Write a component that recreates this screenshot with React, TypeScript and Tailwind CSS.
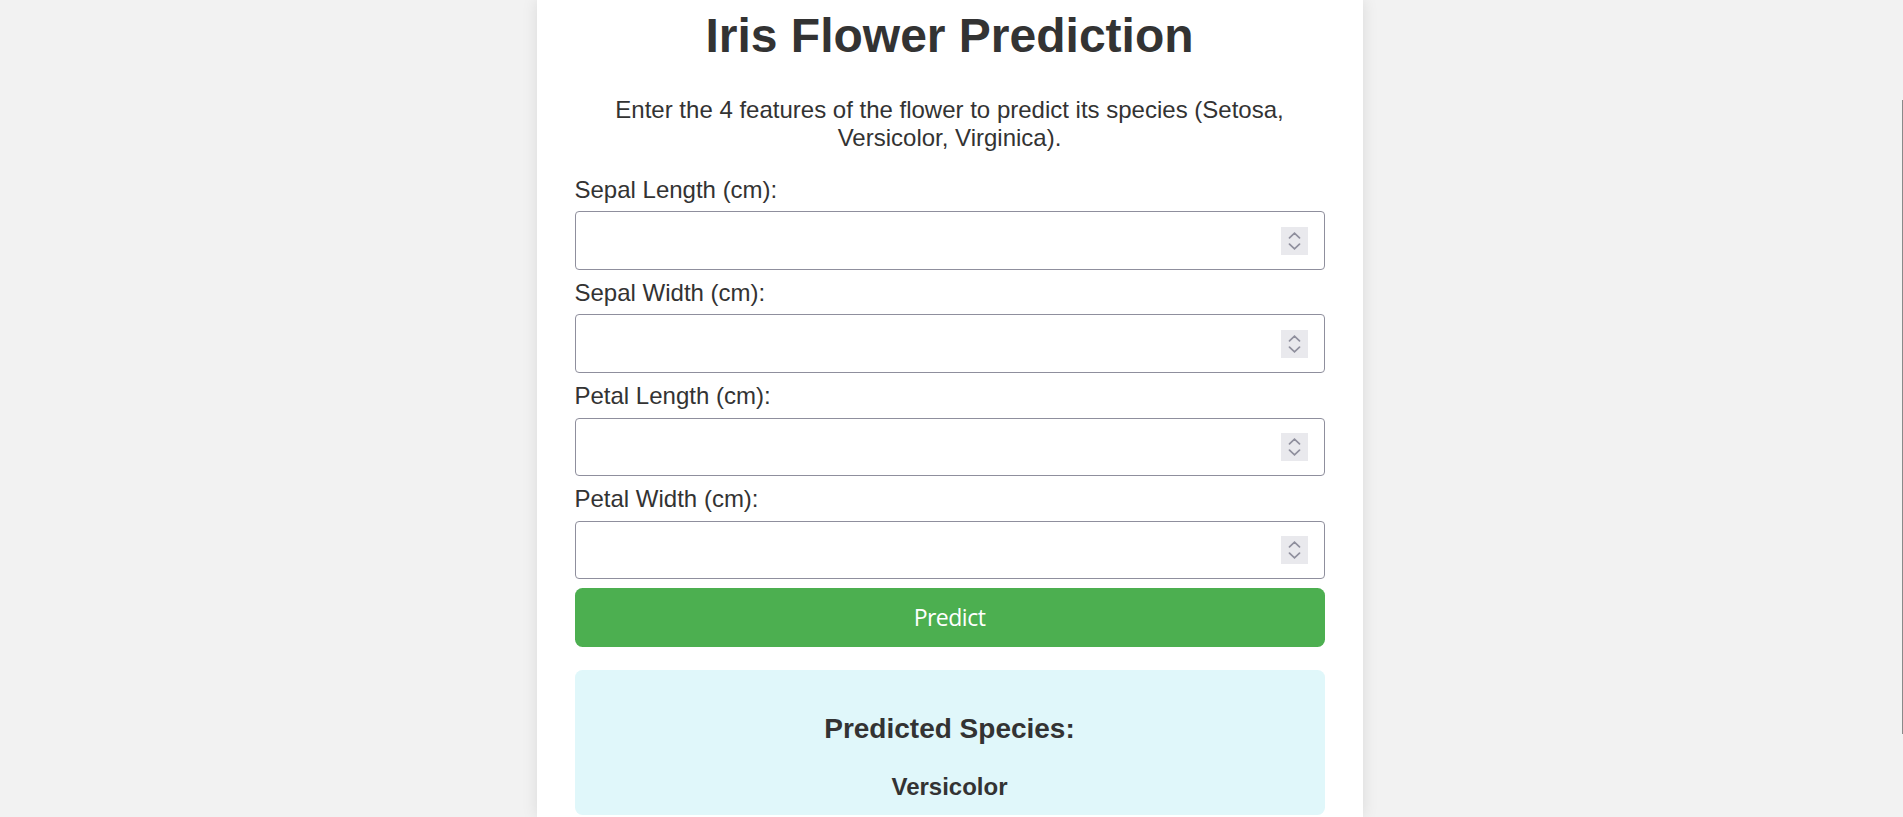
import React, { type FC } from "react"

const FIELDS = [
  { id: "sepal_length", label: "Sepal Length (cm):" },
  { id: "sepal_width", label: "Sepal Width (cm):" },
  { id: "petal_length", label: "Petal Length (cm):" },
  { id: "petal_width", label: "Petal Width (cm):" },
]

const Spinner: FC = () => (
  <span
    className="pointer-events-none absolute right-[17px] top-1/2 flex h-[28px] w-[27px] -translate-y-1/2 flex-col items-center justify-center gap-[4px] bg-[#e9e9ed]"
    aria-hidden="true"
  >
    <svg className="h-[7px] w-[13px]" viewBox="0 0 13 7" fill="none" stroke="#8f8f9d" strokeWidth="1.7" strokeLinecap="round">
      <path d="M1.5 5.8L6.5 1.2l5 4.6" />
    </svg>
    <svg className="h-[7px] w-[13px]" viewBox="0 0 13 7" fill="none" stroke="#8f8f9d" strokeWidth="1.7" strokeLinecap="round">
      <path d="M1.5 1.2L6.5 5.8l5-4.6" />
    </svg>
  </span>
)

const App: FC = () => (
  <div className="flex h-[817px] justify-center overflow-hidden bg-[#f2f2f2] pr-[4px] font-['Liberation_Sans',Arial,sans-serif] text-[#333333]">
    <main className="w-[826px] shrink-0 bg-white px-[38px] pt-[8px] shadow-[0_0_15px_rgba(0,0,0,0.1)]">
      <h1 className="mb-[33px] text-center text-[48px] font-bold leading-[55px]">Iris Flower Prediction</h1>
      <p className="mb-[24.6px] text-center text-[24px] leading-[27.6px]">
        Enter the 4 features of the flower to predict its species (Setosa, Versicolor, Virginica).
      </p>

      <form onSubmit={(e) => e.preventDefault()}>
        {FIELDS.map((f) => (
          <div key={f.id}>
            <label htmlFor={f.id} className="mb-[8px] block text-[24px] leading-[27.6px]">{f.label}</label>
            <div className="relative mb-[9px]">
              <input
                id={f.id}
                type="number"
                step="any"
                className="block h-[58.5px] w-full appearance-none rounded-[4px] border border-[#8f8f9d] bg-white px-[15px] text-[24px] outline-none [-moz-appearance:textfield] [&::-webkit-inner-spin-button]:appearance-none [&::-webkit-outer-spin-button]:appearance-none"
              />
              <Spinner />
            </div>
          </div>
        ))}
        <button
          type="submit"
          className="mb-[22.5px] mt-[1px] block h-[59px] w-full rounded-[7.5px] bg-[#4caf50] font-['Open_Sans',sans-serif] text-[23px] tracking-[-0.5px] text-white"
        >
          Predict
        </button>
      </form>

      <section className="rounded-[7.5px] bg-[#e0f7fa] px-[15px] pb-[14.5px] pt-[15px] text-center">
        <h3 className="mb-[28px] mt-[28px] text-[28px] font-bold leading-[32px]">Predicted Species:</h3>
        <p className="text-[24px] font-bold leading-[27.6px]">Versicolor</p>
      </section>
    </main>
    <div className="fixed right-0 top-[100px] h-[634px] w-px bg-[#8a8a8a]" />
  </div>
)

export default App
